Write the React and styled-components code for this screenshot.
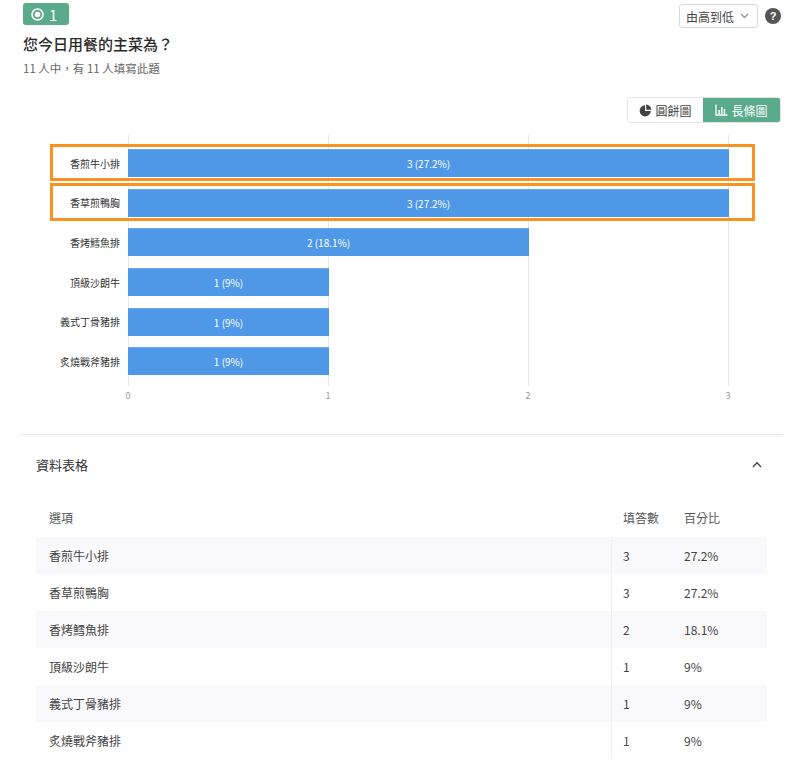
import React from 'react';
import styled, { createGlobalStyle, css } from 'styled-components';

const GlobalStyle = createGlobalStyle`
  html, body {
    margin: 0;
    padding: 0;
    background: #fff;
  }
  body {
    font-family: 'Noto Sans CJK TC', 'Noto Sans', 'Liberation Sans', sans-serif;
    color: #333;
  }
`;

const GREEN = '#5aaa8c';
const BLUE = '#4f98e7';
const ORANGE = '#f7931e';
const UNIT = 200;

const rows = [
  { name: '香煎牛小排', count: 3, pct: '27.2%', mark: true },
  { name: '香草煎鴨胸', count: 3, pct: '27.2%', mark: true },
  { name: '香烤鱈魚排', count: 2, pct: '18.1%' },
  { name: '頂級沙朗牛', count: 1, pct: '9%' },
  { name: '義式丁骨豬排', count: 1, pct: '9%' },
  { name: '炙燒戰斧豬排', count: 1, pct: '9%' },
];

const Page = styled.div`
  width: 800px;
  box-sizing: border-box;
  padding: 0 19px 0 23px;
`;

const Header = styled.div`
  display: flex;
  justify-content: space-between;
  align-items: flex-start;
`;

const Badge = styled.div`
  margin-top: 3px;
  width: 46px;
  height: 22px;
  box-sizing: border-box;
  border-radius: 3px;
  background: ${GREEN};
  color: #fff;
  display: flex;
  align-items: center;
  gap: 5px;
  padding-left: 8px;
  font-size: 15px;
  line-height: 1;
`;

const Title = styled.h1`
  margin: 9px 0 0;
  font-size: 15px;
  line-height: 20px;
  font-weight: 500;
  color: #2b2b2b;
`;

const Sub = styled.div`
  margin-top: 6px;
  font-size: 11.5px;
  line-height: 16px;
  color: #666;
`;

const Controls = styled.div`
  display: flex;
  align-items: center;
  gap: 7px;
  margin-top: 4px;
`;

const Select = styled.div`
  width: 79px;
  height: 24px;
  box-sizing: border-box;
  border: 1px solid #d9d9d9;
  border-radius: 3px;
  display: flex;
  align-items: center;
  justify-content: space-between;
  padding: 0 8px 0 6px;
  font-size: 12px;
  color: #444;
`;

const Help = styled.span`
  width: 16px;
  height: 16px;
  border-radius: 50%;
  background: #555;
  color: #fff;
  font-size: 11px;
  font-weight: 700;
  font-family: 'Liberation Sans', sans-serif;
  display: flex;
  align-items: center;
  justify-content: center;
`;

const ToggleRow = styled.div`
  margin-top: 21px;
  display: flex;
  justify-content: flex-end;
`;

const Toggle = styled.div`
  display: flex;
  height: 26px;
  border: 1px solid #e4e4e4;
  border-radius: 3px;
  overflow: hidden;
  box-sizing: border-box;
`;

const ToggleBtn = styled.div`
  display: flex;
  align-items: center;
  justify-content: center;
  gap: 3px;
  width: ${p => (p.$active ? 77 : 75)}px;
  font-size: 12px;
  color: ${p => (p.$active ? '#fff' : '#444')};
  background: ${p => (p.$active ? GREEN : '#fff')};
`;

const Chart = styled.div`
  margin: 12px 0 0 27px;
  width: 705px;
  box-sizing: border-box;
  padding: 8.5px 0 5px;
  background-image: linear-gradient(to right, #e6e6e8 1px, transparent 1px);
  background-size: ${UNIT}px 100%;
  background-position: 78px 0;
  background-repeat: repeat-x;
`;

const Row = styled.div`
  position: relative;
  display: flex;
  align-items: center;
  height: 39.6px;
  ${p => p.$mark && css`
    &::before {
      content: '';
      position: absolute;
      top: 0;
      left: 0;
      right: 0;
      bottom: 2px;
      border: 3px solid ${ORANGE};
    }
  `}
`;

const Label = styled.div`
  width: 70px;
  text-align: right;
  font-size: 10px;
  color: #333;
  white-space: nowrap;
  margin-right: 8px;
`;

const Bar = styled.div`
  height: 28px;
  background: ${BLUE};
  border-top: 1px solid #6aa8ec;
  box-sizing: border-box;
  color: #fff;
  font-size: 10px;
  display: flex;
  align-items: center;
  justify-content: center;
`;

const Axis = styled.div`
  display: flex;
  gap: 160px;
  margin: 3px 0 0 85px;
`;

const Tick = styled.span`
  width: 40px;
  text-align: center;
  font-size: 9px;
  color: #999;
`;

const Divider = styled.div`
  margin: 32px -2px 0 -3px;
  height: 1px;
  background: #ececef;
  box-shadow: 0 1px 3px rgba(0, 0, 0, 0.06);
`;

const SectionHead = styled.div`
  display: flex;
  justify-content: space-between;
  align-items: center;
  padding: 0 19px 0 13px;
  height: 58px;
  font-size: 13px;
  color: #333;
`;

const Table = styled.div`
  margin: 4px 0 0 13px;
  width: 731px;
  font-size: 12px;
  color: #444;
`;

const TRow = styled.div`
  display: grid;
  grid-template-columns: 1fr 72px 84px;
  align-items: center;
  height: ${p => (p.$head ? 40 : 37)}px;
  padding-left: 13px;
  background: ${p => (p.$shade ? '#f9f9fb' : '#fff')};
  color: ${p => (p.$head ? '#555' : '#444')};
`;

const Cell = styled.span`
  padding-left: ${p => p.$pad || 0}px;
  align-self: stretch;
  display: flex;
  align-items: center;
  ${p => p.$split && css`border-left: 1px solid #f1f1f4;`}
`;

const RadioIcon = () => (
  <svg width="13" height="13" viewBox="0 0 13 13">
    <circle cx="6.5" cy="6.5" r="5.5" fill="none" stroke="#fff" strokeWidth="1.5" />
    <circle cx="6.5" cy="6.5" r="2.8" fill="#fff" />
  </svg>
);

const ChevronDown = () => (
  <svg width="9" height="6" viewBox="0 0 9 6">
    <path d="M1 1l3.5 3.5L8 1" fill="none" stroke="#888" strokeWidth="1.1" />
  </svg>
);

const ChevronUp = () => (
  <svg width="10" height="7" viewBox="0 0 10 7">
    <path d="M1 6l4-4.2L9 6" fill="none" stroke="#444" strokeWidth="1.4" />
  </svg>
);

const PieIcon = () => (
  <svg width="13" height="13" viewBox="0 0 13 13">
    <path d="M6 1.2A5.6 5.6 0 1 0 11.8 7H6z" fill="#444" />
    <path d="M7.2 0.6V5.8h5.2A5.4 5.4 0 0 0 7.2 0.6z" fill="#444" />
  </svg>
);

const BarIcon = () => (
  <svg width="13" height="12" viewBox="0 0 13 12">
    <path d="M1 0.5v10.5h11.5" fill="none" stroke="#fff" strokeWidth="1.3" />
    <rect x="3.3" y="6" width="1.5" height="4" fill="#fff" />
    <rect x="6" y="3" width="1.5" height="7" fill="#fff" />
    <rect x="8.7" y="5" width="1.5" height="5" fill="#fff" />
  </svg>
);

export default function App() {
  return (
    <Page>
      <GlobalStyle />
      <Header>
        <div>
          <Badge><RadioIcon />1</Badge>
          <Title>您今日用餐的主菜為？</Title>
          <Sub>11 人中，有 11 人填寫此題</Sub>
        </div>
        <Controls>
          <Select>由高到低<ChevronDown /></Select>
          <Help>?</Help>
        </Controls>
      </Header>

      <ToggleRow>
        <Toggle>
          <ToggleBtn><PieIcon />圓餅圖</ToggleBtn>
          <ToggleBtn $active><BarIcon />長條圖</ToggleBtn>
        </Toggle>
      </ToggleRow>

      <Chart>
        {rows.map(r => (
          <Row key={r.name} $mark={r.mark}>
            <Label>{r.name}</Label>
            <Bar style={{ width: r.count * UNIT + 1 }}>
              {r.count} ({r.pct})
            </Bar>
          </Row>
        ))}
      </Chart>
      <Axis>
        {[0, 1, 2, 3].map(n => <Tick key={n}>{n}</Tick>)}
      </Axis>

      <Divider />
      <SectionHead>
        資料表格
        <ChevronUp />
      </SectionHead>

      <Table>
        <TRow $head>
          <Cell>選項</Cell>
          <Cell $pad={12}>填答數</Cell>
          <Cell $pad={1}>百分比</Cell>
        </TRow>
        {rows.map((r, i) => (
          <TRow key={r.name} $shade={i % 2 === 0}>
            <Cell>{r.name}</Cell>
            <Cell $pad={11} $split>{r.count}</Cell>
            <Cell $pad={1}>{r.pct}</Cell>
          </TRow>
        ))}
      </Table>
    </Page>
  );
}
